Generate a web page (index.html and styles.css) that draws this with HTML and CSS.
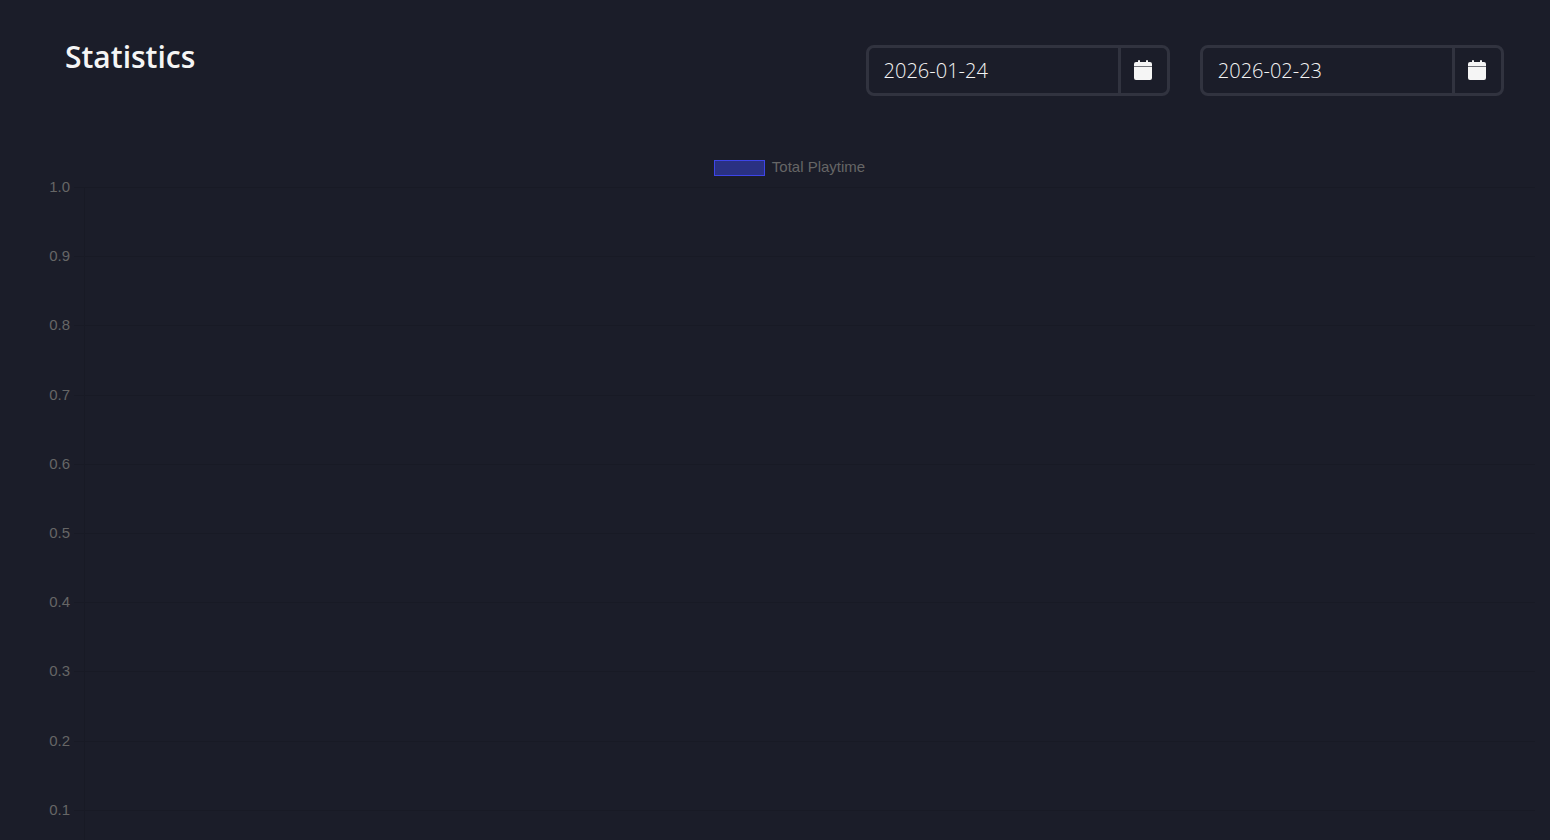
FILE: index.html
```html
<!DOCTYPE html>
<html lang="en">
<head>
<meta charset="utf-8">
<meta name="viewport" content="width=device-width, initial-scale=1">
<title>Statistics</title>
<link rel="stylesheet" href="styles.css">
</head>
<body>
<main class="page">
  <header class="toolbar">
    <h1 class="title">Statistics</h1>
    <div class="date-field">
      <input class="date-input" type="text" value="2026-01-24" aria-label="Start date">
      <button class="date-button" type="button" aria-label="Choose start date">
        <svg class="icon" viewBox="0 0 18 20" aria-hidden="true"><path d="M0 6V4Q0 2 2 2H4V1Q4 0 5 0T6 1V2H12V1Q12 0 13 0T14 1V2H16Q18 2 18 4V6ZM0 7H18V18Q18 20 16 20H2Q0 20 0 18Z"/><path d="M0 6H18V7H0Z" opacity=".4"/></svg>
      </button>
    </div>
    <div class="date-field">
      <input class="date-input" type="text" value="2026-02-23" aria-label="End date">
      <button class="date-button" type="button" aria-label="Choose end date">
        <svg class="icon" viewBox="0 0 18 20" aria-hidden="true"><path d="M0 6V4Q0 2 2 2H4V1Q4 0 5 0T6 1V2H12V1Q12 0 13 0T14 1V2H16Q18 2 18 4V6ZM0 7H18V18Q18 20 16 20H2Q0 20 0 18Z"/><path d="M0 6H18V7H0Z" opacity=".4"/></svg>
      </button>
    </div>
  </header>
  <section class="chart" aria-label="Total Playtime">
    <div class="legend"><span class="swatch"></span><span>Total Playtime</span></div>
    <div class="plot">
      <div class="row"><span class="tick">1.0</span><span class="cell"></span></div>
      <div class="row"><span class="tick">0.9</span><span class="cell"></span></div>
      <div class="row"><span class="tick">0.8</span><span class="cell"></span></div>
      <div class="row"><span class="tick">0.7</span><span class="cell"></span></div>
      <div class="row"><span class="tick">0.6</span><span class="cell"></span></div>
      <div class="row"><span class="tick">0.5</span><span class="cell"></span></div>
      <div class="row"><span class="tick">0.4</span><span class="cell"></span></div>
      <div class="row"><span class="tick">0.3</span><span class="cell"></span></div>
      <div class="row"><span class="tick">0.2</span><span class="cell"></span></div>
      <div class="row"><span class="tick">0.1</span><span class="cell"></span></div>
    </div>
  </section>
</main>
</body>
</html>
```
FILE: styles.css
```css
* {
  box-sizing: border-box;
}

html {
  background: #1b1d29;
  scrollbar-width: none;
}

body {
  margin: 0;
  color: #f5f5f5;
  font-family: "Open Sans", sans-serif;
}

.toolbar {
  display: grid;
  grid-template-columns: minmax(0, 38fr) minmax(0, 15fr) minmax(0, 15fr);
  gap: 30px;
  padding: 45px 46px 0 65px;
}

.title {
  margin: 0;
  font-size: 30px;
  font-weight: 600;
  line-height: 24px;
}

.date-field {
  display: flex;
  height: 51px;
  border: 3px solid #31333f;
  border-radius: 8px;
}

.date-input {
  flex: 1;
  min-width: 0;
  padding: 0 15px;
  border: 0;
  background: transparent;
  color: inherit;
  font: 300 20px "Open Sans", sans-serif;
}

.date-button {
  display: flex;
  align-items: center;
  justify-content: center;
  width: 49px;
  padding: 0 2px 2px 0;
  border: 0;
  border-left: 3px solid #31333f;
  background: transparent;
  color: inherit;
}

.icon {
  width: 18px;
  height: 20px;
  fill: currentColor;
}

.chart {
  padding: 62px 15px 0 30px;
  color: #666;
  font: 15px/18px "Liberation Sans", Arial, sans-serif;
}

.legend {
  display: flex;
  align-items: center;
  justify-content: center;
  gap: 7px;
  padding-left: 14px;
}

.swatch {
  width: 51px;
  height: 16px;
  margin-top: 2px;
  border: 1px solid #3d45e8;
  background: #2a3182;
}

.plot {
  display: grid;
  grid-template-rows: repeat(10, 1fr);
  height: 692px;
  margin-top: 11px;
}

.row {
  display: grid;
  grid-template-columns: 44px 1fr;
}

.tick {
  padding-right: 4px;
  margin-top: -9px;
  text-align: right;
}

.cell {
  display: flex;
  border-top: 1px solid #181a25;
}

.cell::before {
  content: "";
  width: 10px;
  border-right: 1px solid #181a25;
}
```
